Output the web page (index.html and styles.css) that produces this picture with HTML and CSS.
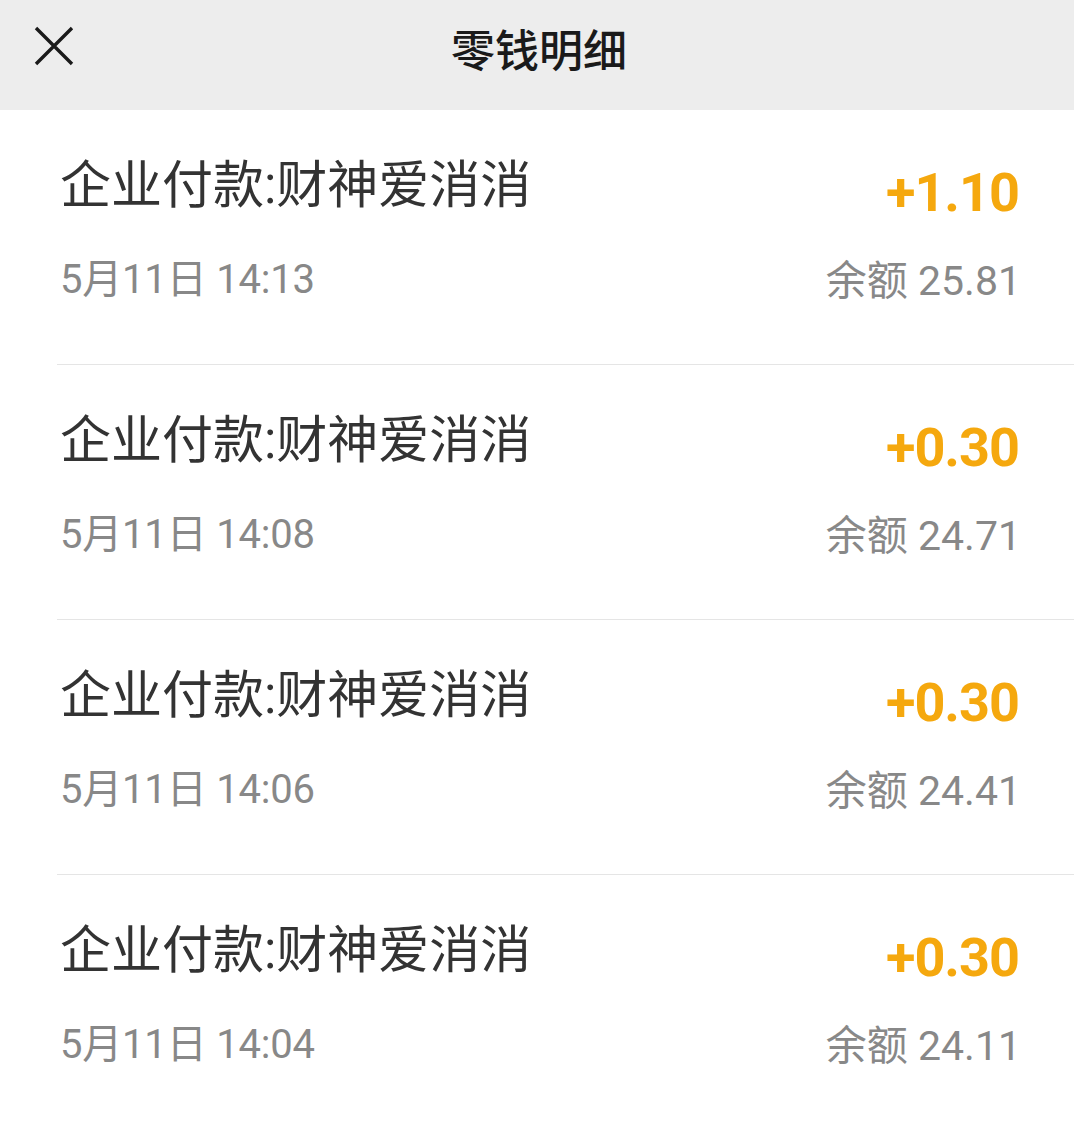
FILE: index.html
```html
<!DOCTYPE html>
<html lang="zh-CN">
<head>
    <meta charset="UTF-8">
    <meta name="viewport" content="width=device-width, initial-scale=1.0">
    <title>零钱明细</title>
    <link rel="stylesheet" href="styles.css">
</head>
<body>
    <div class="top-bar">
        <div class="close-btn">
            <svg width="40" height="40" viewBox="0 0 40 40">
                <path d="M2 2 L38 38 M38 2 L2 38" stroke="#1a1a1a" stroke-width="3.4" fill="none"/>
            </svg>
        </div>
        <div class="page-title">零钱明细</div>
        <div></div>
    </div>

    <div class="record-list">
        <div class="record">
            <div class="record-left">
                <div class="record-name">企业付款:财神爱消消</div>
                <div class="record-time">5月11日 14:13</div>
            </div>
            <div class="record-right">
                <div class="record-amount">+1.10</div>
                <div class="record-balance">余额 25.81</div>
            </div>
        </div>
        <div class="record">
            <div class="record-left">
                <div class="record-name">企业付款:财神爱消消</div>
                <div class="record-time">5月11日 14:08</div>
            </div>
            <div class="record-right">
                <div class="record-amount">+0.30</div>
                <div class="record-balance">余额 24.71</div>
            </div>
        </div>
        <div class="record">
            <div class="record-left">
                <div class="record-name">企业付款:财神爱消消</div>
                <div class="record-time">5月11日 14:06</div>
            </div>
            <div class="record-right">
                <div class="record-amount">+0.30</div>
                <div class="record-balance">余额 24.41</div>
            </div>
        </div>
        <div class="record">
            <div class="record-left">
                <div class="record-name">企业付款:财神爱消消</div>
                <div class="record-time">5月11日 14:04</div>
            </div>
            <div class="record-right">
                <div class="record-amount">+0.30</div>
                <div class="record-balance">余额 24.11</div>
            </div>
        </div>
    </div>
</body>
</html>
```

FILE: styles.css
```css
body {
    margin: 0;
    background-color: #ffffff;
    font-family: Roboto, "Noto Sans CJK SC", sans-serif;
}
.top-bar {
    height: 110px;
    background-color: #ededed;
    display: grid;
    grid-template-columns: 1fr auto 1fr;
    align-items: center;
}
.close-btn {
    padding-left: 34px;
    padding-bottom: 18px;
    display: flex;
}
.page-title {
    font-family: "Noto Sans CJK SC", sans-serif;
    font-size: 44px;
    font-weight: 500;
    color: #1a1a1a;
    padding-bottom: 14px;
    padding-left: 4px;
}
.record-list {
    margin-left: 57px;
}
.record {
    display: flex;
    justify-content: space-between;
    height: 254px;
    padding: 0 55px 0 3px;
    border-bottom: 1px solid #e5e5e5;
}
.record-left {
    padding-top: 46px;
}
.record-name {
    font-size: 51px;
    line-height: 60px;
    color: #333333;
}
.record-time {
    margin-top: 38px;
    font-size: 40px;
    line-height: 51px;
    letter-spacing: -0.2px;
    color: #888888;
}
.record-right {
    padding-top: 53px;
    text-align: right;
}
.record-amount {
    font-size: 54px;
    line-height: 60px;
    font-weight: bold;
    letter-spacing: -1px;
    color: #f5a80e;
}
.record-balance {
    margin-top: 33px;
    margin-right: -2px;
    font-size: 41px;
    line-height: 50px;
    color: #888888;
}
```
